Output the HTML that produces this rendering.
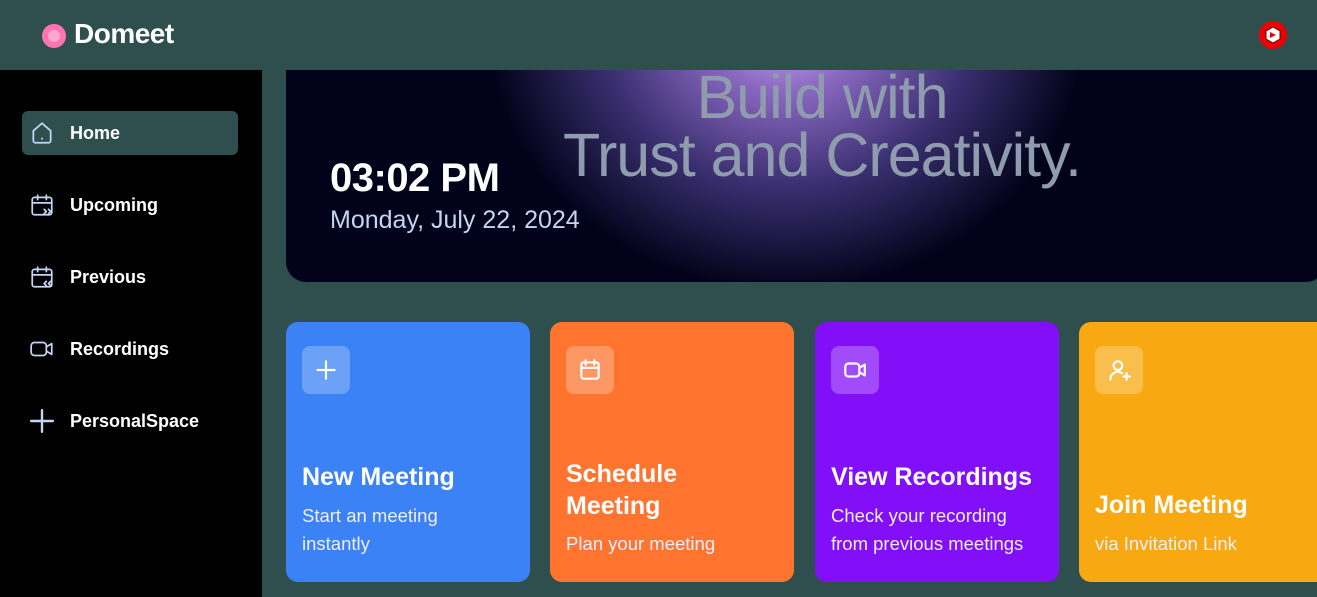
<!DOCTYPE html>
<html><head><meta charset="utf-8"><style>
*{margin:0;padding:0;box-sizing:border-box}
body{width:1317px;height:597px;overflow:hidden;background:#2f4f4f;font-family:"Liberation Sans",sans-serif;position:relative;color:#fff}
.hdr{position:absolute;left:0;top:0;width:1317px;height:70px;background:#2f4f4f;z-index:5}
.logo{position:absolute;left:42px;top:24px;width:24px;height:24px;border-radius:50%;background:#ff74b1}
.logo:after{content:"";position:absolute;left:6px;top:6px;width:12px;height:12px;border-radius:50%;background:#ffa8cf}
.brand{position:absolute;left:74px;top:18px;font-size:28px;font-weight:bold;letter-spacing:-0.5px}
.side{position:absolute;left:0;top:70px;width:262px;height:527px;background:#000}
.nav{position:absolute;left:22px;width:216px;height:44px;border-radius:6px;display:flex;align-items:center;padding-left:7px;font-size:18px;font-weight:bold}
.nav svg{width:26px;height:26px;margin-right:15px;fill:none;stroke:#c5d5f5;stroke-width:1.6;stroke-linecap:round;stroke-linejoin:round}
.hero{position:absolute;left:286px;top:0px;width:1040px;height:282px;border-radius:20px;overflow:hidden;background:#02031a}
.glow{position:absolute;left:190px;top:-10px;width:620px;height:310px;background:radial-gradient(ellipse at 50% 10%,#d0b0fa 0%,#8a68c0 18%,#3a2f70 42%,rgba(2,3,26,0) 68%)}
.t1{position:absolute;left:0;width:1072px;text-align:center;color:#8e9cad;font-size:61px;letter-spacing:-1px}
.time{position:absolute;left:44px;top:156px;font-size:40px;font-weight:bold;letter-spacing:-0.5px}
.date{position:absolute;left:44px;top:206px;font-size:25px;color:#c5d5f0}
.card{position:absolute;top:322px;width:244px;height:260px;border-radius:12px}
.ic{position:absolute;left:16px;top:24px;width:48px;height:48px;border-radius:8px;background:rgba(255,255,255,.25);display:flex;align-items:center;justify-content:center}
.ic svg{width:26px;height:26px;fill:none;stroke:#fff;stroke-width:2;stroke-linecap:round;stroke-linejoin:round}
.ct{position:absolute;left:16px;font-size:25px;font-weight:bold;line-height:32px}
.cs{position:absolute;left:16px;font-size:18.5px;line-height:28px;color:#eef}
</style></head><body>
<div class="hdr"><div class="logo"></div><div class="brand">Domeet</div>
<svg style="position:absolute;left:1259px;top:21px" width="28" height="28" viewBox="0 0 28 28"><circle cx="14" cy="14" r="14" fill="#e00"/><path d="M14 6l7 4v8l-7 4-7-4v-8z" fill="#fff" stroke="#600" stroke-width="1"/><path d="M11 11l6 3-6 3z" fill="#e00"/></svg></div>
<div class="side">
<div class="nav" style="top:41px;background:#2f4f4f"><svg viewBox="0 0 24 24"><path d="M4 10l8-7 8 7v9a2 2 0 0 1-2 2H6a2 2 0 0 1-2-2z"/><path d="M12 17v.5"/></svg>Home</div>
<div class="nav" style="top:113px"><svg viewBox="0 0 24 24"><rect x="3" y="5" width="18" height="16" rx="2"/><path d="M3 10h18M8 3v4M16 3v4M14 16l2 2-2 2M18 16l2 2-2 2"/></svg>Upcoming</div>
<div class="nav" style="top:185px"><svg viewBox="0 0 24 24"><rect x="3" y="5" width="18" height="16" rx="2"/><path d="M3 10h18M8 3v4M16 3v4M16 16l-2 2 2 2M20 16l-2 2 2 2"/></svg>Previous</div>
<div class="nav" style="top:257px"><svg viewBox="0 0 24 24"><rect x="2" y="6" width="14" height="12" rx="3"/><path d="M16 10l5-3v10l-5-3"/></svg>Recordings</div>
<div class="nav" style="top:329px"><svg viewBox="0 0 24 24" style="stroke-width:2.2"><path d="M12 2v20M2 12h20"/></svg>PersonalSpace</div>
</div>
<div class="hero"><div class="glow"></div>
<div class="t1" style="top:62px">Build with</div>
<div class="t1" style="top:120px">Trust and Creativity.</div>
<div class="time">03:02 PM</div><div class="date">Monday, July 22, 2024</div></div>
<div class="card" style="left:286px;background:#3b82f6"><div class="ic"><svg viewBox="0 0 24 24"><path d="M12 4v16M4 12h16"/></svg></div><div class="ct" style="top:139px">New Meeting</div><div class="cs" style="top:180px">Start an meeting<br>instantly</div></div>
<div class="card" style="left:550px;background:#ff7530"><div class="ic"><svg viewBox="0 0 24 24"><rect x="4" y="5" width="16" height="15" rx="2"/><path d="M4 10h16M8 3v4M16 3v4"/></svg></div><div class="ct" style="top:136px">Schedule<br>Meeting</div><div class="cs" style="top:208px">Plan your meeting</div></div>
<div class="card" style="left:815px;background:#830ff8"><div class="ic"><svg viewBox="0 0 24 24"><rect x="3" y="6" width="13" height="12" rx="3"/><path d="M16 10l5-3v10l-5-3"/></svg></div><div class="ct" style="top:139px">View Recordings</div><div class="cs" style="top:180px">Check your recording<br>from previous meetings</div></div>
<div class="card" style="left:1079px;width:250px;background:#f8a911"><div class="ic"><svg viewBox="0 0 24 24"><circle cx="11" cy="8" r="4"/><path d="M4 21a7 7 0 0 1 11-6M19 15v6M16 18h6"/></svg></div><div class="ct" style="top:167px">Join Meeting</div><div class="cs" style="top:208px">via Invitation Link</div></div>
</body></html>
